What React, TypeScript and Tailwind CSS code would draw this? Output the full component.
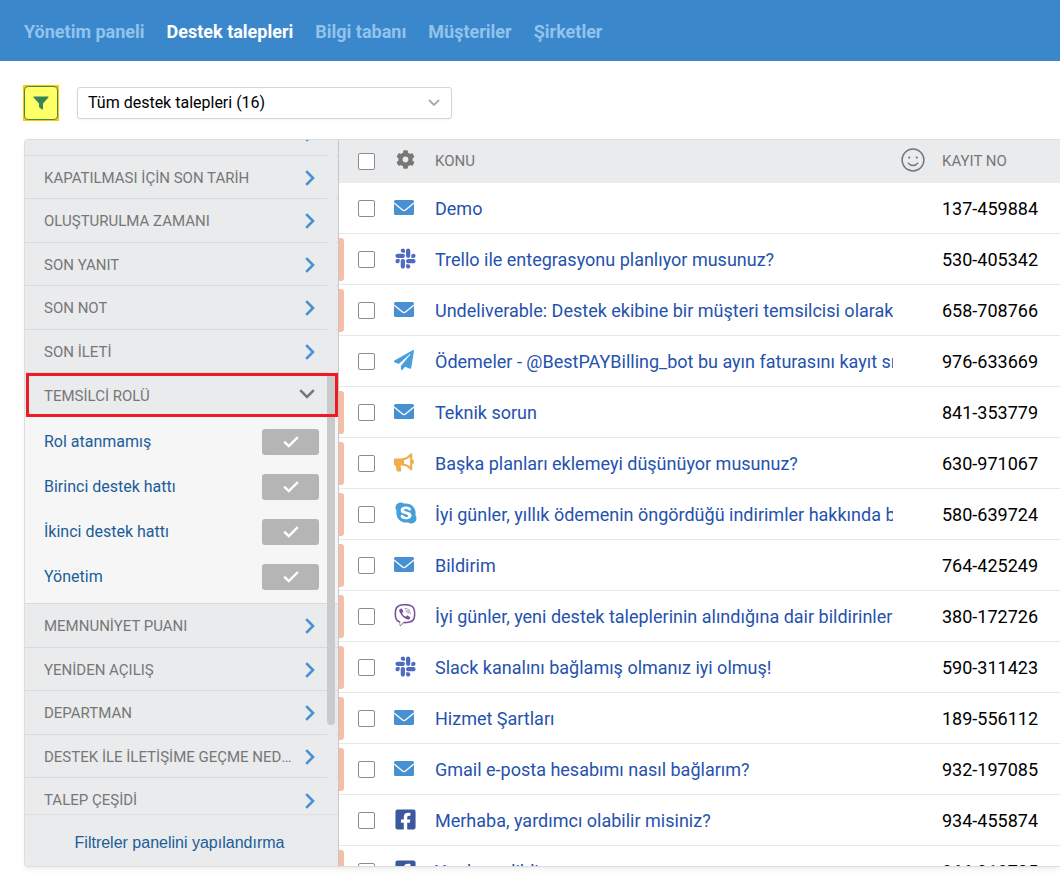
import type { ReactNode } from 'react'
import { FaCog, FaFacebookSquare, FaPaperPlane, FaSkype, FaSlack, FaViber } from 'react-icons/fa'

type Channel = 'mail' | 'slack' | 'telegram' | 'announce' | 'skype' | 'viber' | 'facebook'

interface Ticket {
  subject: string
  number: string
  channel: Channel
  waiting?: boolean
}

const NAV = ['Yönetim paneli', 'Destek talepleri', 'Bilgi tabanı', 'Müşteriler', 'Şirketler']

const FILTERS_ABOVE = ['', 'KAPATILMASI İÇİN SON TARİH', 'OLUŞTURULMA ZAMANI', 'SON YANIT', 'SON NOT', 'SON İLETİ']

const FILTERS_BELOW = [
  'MEMNUNİYET PUANI',
  'YENİDEN AÇILIŞ',
  'DEPARTMAN',
  'DESTEK İLE İLETİŞİME GEÇME NEDENİ',
  'TALEP ÇEŞİDİ',
]

const ROLES = ['Rol atanmamış', 'Birinci destek hattı', 'İkinci destek hattı', 'Yönetim']

const TICKETS: Ticket[] = [
  { subject: 'Demo', number: '137-459884', channel: 'mail' },
  { subject: 'Trello ile entegrasyonu planlıyor musunuz?', number: '530-405342', channel: 'slack', waiting: true },
  { subject: 'Undeliverable: Destek ekibine bir müşteri temsilcisi olarak', number: '658-708766', channel: 'mail', waiting: true },
  { subject: 'Ödemeler - @BestPAYBilling_bot bu ayın faturasını kayıt sı', number: '976-633669', channel: 'telegram' },
  { subject: 'Teknik sorun', number: '841-353779', channel: 'mail', waiting: true },
  { subject: 'Başka planları eklemeyi düşünüyor musunuz?', number: '630-971067', channel: 'announce', waiting: true },
  { subject: 'İyi günler, yıllık ödemenin öngördüğü indirimler hakkında b', number: '580-639724', channel: 'skype', waiting: true },
  { subject: 'Bildirim', number: '764-425249', channel: 'mail', waiting: true },
  { subject: 'İyi günler, yeni destek taleplerinin alındığına dair bildirinleri', number: '380-172726', channel: 'viber', waiting: true },
  { subject: 'Slack kanalını bağlamış olmanız iyi olmuş!', number: '590-311423', channel: 'slack', waiting: true },
  { subject: 'Hizmet Şartları', number: '189-556112', channel: 'mail', waiting: true },
  { subject: 'Gmail e-posta hesabımı nasıl bağlarım?', number: '932-197085', channel: 'mail', waiting: true },
  { subject: 'Merhaba, yardımcı olabilir misiniz?', number: '934-455874', channel: 'facebook' },
  { subject: 'Yardım edildi', number: '866-918725', channel: 'facebook', waiting: true },
]

function MailIcon() {
  return (
    <svg width="20" height="15" viewBox="0 0 20 15">
      <rect width="20" height="15" rx="1.5" fill="#4791d3" />
      <path d="M0 3 8.2 9.8Q10 11.4 11.8 9.8L20 3" fill="none" stroke="#fff" strokeWidth="1.3" />
    </svg>
  )
}

function MegaphoneIcon() {
  return (
    <svg width="20" height="20" viewBox="0 0 20 20" fill="#f0ad4e">
      <path d="M0 7.4Q0 6.4 1 6.4H9V13.4H6.6L7.3 18.6Q7.4 19.6 6.4 19.6H3.6Q2.8 19.6 2.6 18.8L1.6 13.4H1Q0 13.4 0 12.4Z" />
      <path d="M9 7.4Q14 6.4 17.2 2.4V17.2Q14 13.2 9 12.4Z" fill="none" stroke="#f0ad4e" strokeWidth="2.2" strokeLinejoin="round" />
      <rect x="17.6" y="7.8" width="2.2" height="4" rx="1" />
    </svg>
  )
}

function FunnelIcon() {
  return (
    <svg width="16" height="14" viewBox="0 0 16 14" fill="#358357">
      <path d="M1 .5h14q1 .2.4 1.1L10 7.6V13q-.2.8-1 .4L6.2 11.3Q6 11 6 10.7V7.6L.6 1.6Q0 .7 1 .5Z" />
    </svg>
  )
}

function SmileIcon() {
  return (
    <svg width="24" height="24" viewBox="0 0 24 24" fill="none" stroke="#777" strokeWidth="1.5" strokeLinecap="round">
      <circle cx="12" cy="12" r="10.9" />
      <path d="M7.3 15.2c2.2 3.2 7.2 3.2 9.4 0" />
      <circle cx="8.2" cy="9.6" r="1.1" fill="#777" stroke="none" />
      <circle cx="15.8" cy="9.6" r="1.1" fill="#777" stroke="none" />
    </svg>
  )
}

function ChevronRight() {
  return (
    <svg className="shrink-0" width="10" height="16" viewBox="0 0 10 16" fill="none" stroke="#4791d3" strokeWidth="2.6">
      <path d="M1.2 1.2 8 8l-6.8 6.8" />
    </svg>
  )
}

const CHANNEL_ICONS: Record<Channel, ReactNode> = {
  mail: <MailIcon />,
  slack: <FaSlack size={23} color="#4f6bc0" />,
  telegram: <FaPaperPlane size={20} color="#4a9fdb" />,
  announce: <MegaphoneIcon />,
  skype: <FaSkype size={24} color="#459fdb" />,
  viber: <FaViber size={22} color="#7a519a" />,
  facebook: <FaFacebookSquare size={23} color="#3b579d" />,
}

function Checkbox({ label }: { label: string }) {
  return (
    <input
      type="checkbox"
      aria-label={label}
      className="block h-[17px] w-[17px] appearance-none rounded-[2px] border border-[#8c8c8c] bg-white checked:bg-[#4791d3]"
    />
  )
}

function FilterRow({ label }: { label: string }) {
  return (
    <button
      type="button"
      className="flex min-h-0 flex-1 items-center justify-between gap-3 border-b border-[#d8dadb] pt-0.5 pr-[23px] pl-[19px] text-left text-[15px] text-[#777]"
    >
      <span className="truncate">{label}</span>
      <ChevronRight />
    </button>
  )
}

function Sidebar() {
  return (
    <aside className="flex w-[314px] shrink-0 flex-col border-r border-[#c5c7c9] bg-[#e9ebec]">
      <div className="relative min-h-0 flex-1 overflow-hidden">
        <div className="-mt-7 flex h-[261px] flex-col">
          {FILTERS_ABOVE.map((label) => (
            <FilterRow key={label} label={label} />
          ))}
        </div>
        <div className="relative">
          <button
            type="button"
            aria-expanded="true"
            className="flex h-11 w-full items-center justify-between pt-0.5 pr-[23px] pl-[19px] text-[15px] text-[#777]"
          >
            TEMSİLCİ ROLÜ
            <svg className="mb-1" width="16" height="10" viewBox="0 0 16 10" fill="none" stroke="#777" strokeWidth="2.6">
              <path d="M1.2 1.2 8 8l6.8-6.8" />
            </svg>
          </button>
          <div className="pointer-events-none absolute inset-0 z-10 ml-px border-3 border-[#ed1c24]" />
        </div>
        <div className="border-b border-[#d8dadb] bg-[#f6f6f6] pt-0.5 pb-1">
          {ROLES.map((role) => (
            <div key={role} className="flex h-[45px] items-center justify-between px-[19px]">
              <span className="text-base text-[#1c5d99]">{role}</span>
              <button
                type="button"
                aria-label={role}
                className="flex h-[26px] w-[57px] items-center justify-center rounded-[3px] bg-[#b5b5b5]"
              >
                <svg width="16" height="12" viewBox="0 0 16 12" fill="none" stroke="#fff" strokeWidth="2.4">
                  <path d="M1.2 5.6 5.8 10 14.8 1.2" />
                </svg>
              </button>
            </div>
          ))}
        </div>
        <div className="flex h-[218px] flex-col">
          {FILTERS_BELOW.map((label) => (
            <FilterRow key={label} label={label} />
          ))}
        </div>
        {/* scroll track and thumb */}
        <div className="absolute inset-y-0 right-[3px] w-2">
          <div className="h-[233px] bg-[#e9ebec]" />
          <div className="h-[352px] rounded-full bg-[#c9cacc]" />
          <div className="h-[89px] bg-[#e9ebec]" />
        </div>
      </div>
      <a
        href="#filters"
        className="flex h-[52px] shrink-0 items-center justify-center border-t border-[#dcdedf] pt-1 pr-1 font-['Liberation_Sans',Arial,sans-serif] text-base text-[#1c5d99]"
      >
        Filtreler panelini yapılandırma
      </a>
    </aside>
  )
}

function TicketTable() {
  return (
    <div className="min-w-0 flex-1 overflow-hidden">
      <table className="w-full table-fixed border-separate border-spacing-0">
        <thead>
          <tr className="h-[43px] bg-[#e9ebec] text-left text-[15px] text-[#777]">
            <th className="w-[55px] p-0 pl-[19px]">
              <Checkbox label="Tümünü seç" />
            </th>
            <th className="w-[41px] p-0 pb-1 pl-0.5">
              <FaCog size={19} color="#777" />
            </th>
            <th className="p-0 font-normal">KONU</th>
            <th className="w-[49px] p-0 pb-1 pl-2">
              <SmileIcon />
            </th>
            <th className="w-[118px] p-0 font-normal">KAYIT NO</th>
          </tr>
        </thead>
        <tbody>
          {TICKETS.map((ticket) => (
            <tr key={ticket.number} className="h-[51px] text-lg">
              <td className="border-b border-[#e8e8e8] p-0">
                <div className="flex h-[50px] items-center gap-[14px]">
                  <span className={ticket.waiting ? 'h-[43px] w-[5px] rounded-r-[3px] bg-[#f7bda6]' : 'w-[5px]'} />
                  <Checkbox label={ticket.subject} />
                </div>
              </td>
              <td className="border-b border-[#e8e8e8] p-0 pb-0.5">{CHANNEL_ICONS[ticket.channel]}</td>
              <td className="overflow-hidden border-b border-[#e8e8e8] p-0 pt-0.5 whitespace-nowrap">
                <a href="#ticket" className="text-[#2552ad]">
                  {ticket.subject}
                </a>
              </td>
              <td className="border-b border-[#e8e8e8] p-0" />
              <td className="border-b border-[#e8e8e8] p-0 pt-0.5 text-black">{ticket.number}</td>
            </tr>
          ))}
        </tbody>
      </table>
    </div>
  )
}

export default function App() {
  return (
    <div className="flex h-screen flex-col overflow-hidden bg-white font-[Roboto,sans-serif]">
      <header className="shrink-0 bg-[#3a87cc]">
        <nav className="flex h-[61px] items-center gap-[22px] px-6 pt-0.5 text-lg font-bold">
          {NAV.map((item) => (
            <a key={item} href="#nav" className={item === 'Destek talepleri' ? 'text-white' : 'text-[#92c3ec]'}>
              {item}
            </a>
          ))}
        </nav>
      </header>

      <div className="flex shrink-0 items-center gap-[18px] pt-6 pr-6 pb-[18px] pl-[23px]">
        <button type="button" aria-label="Filtre" className="h-9 w-9 border border-[#fdc60b] bg-[#fdc60b]">
          <span className="flex h-full items-center justify-center rounded-[4px] border border-[#3c8f3f] bg-[#ffff66]">
            <FunnelIcon />
          </span>
        </button>
        <div className="relative w-[375px]">
          <select
            aria-label="Liste"
            className="block h-8 w-full appearance-none rounded-[3px] border border-[#d5d5d5] bg-white pr-8 pl-[10px] text-base text-black shadow-xs"
          >
            <option>Tüm destek talepleri (16)</option>
          </select>
          <svg
            className="pointer-events-none absolute top-3 right-3"
            width="12"
            height="8"
            viewBox="0 0 12 8"
            fill="none"
            stroke="#aaa"
            strokeWidth="1.8"
          >
            <path d="M1 1l5 5 5-5" />
          </svg>
        </div>
      </div>

      <main className="mb-[26px] ml-6 flex min-h-0 flex-1 overflow-hidden rounded-l-[4px] border-y border-l border-[#dcdddd] shadow-md shadow-black/5">
        <Sidebar />
        <TicketTable />
      </main>
    </div>
  )
}
